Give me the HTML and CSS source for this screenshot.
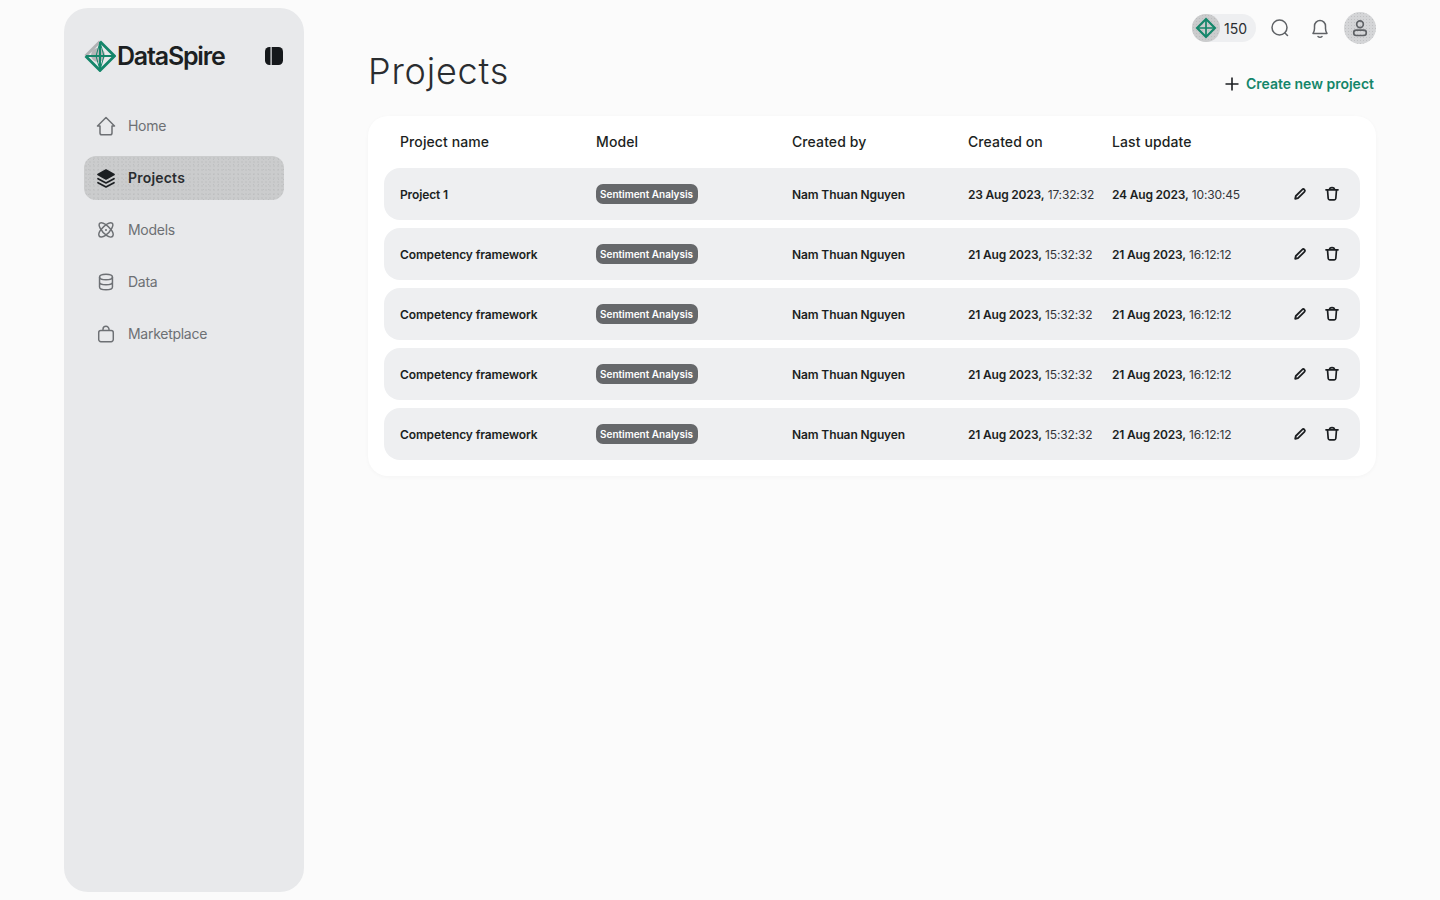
FILE: index.html
```html
<!DOCTYPE html>
<html lang="en">
<head>
<meta charset="utf-8">
<title>Projects</title>
<link rel="stylesheet" href="styles.css">
</head>
<body>
<div class="app">
  <aside class="sidebar">
    <div class="brand">
      <div class="logo">
        <svg class="logo-mark" width="32" height="32" viewBox="0 0 32 32" fill="none">
          <circle cx="14" cy="15" r="7" fill="#b4b6b8"/>
          <path d="M1.500 16 16 1.500" stroke="#b0b2b4" stroke-width="2.800"/>
          <path d="M16 1.500 30.500 16 16 30.500 1.500 16" stroke="#14866a" stroke-width="2.800"/>
          <path d="M16 2V30M2 16H30" stroke="#14866a" stroke-width="2"/>
          <path d="M16 2 12 16 16 30 20 16Z" stroke="#14866a" stroke-width="1"/>
        </svg>
        <span class="logo-text">DataSpire</span>
      </div>
      <svg width="18" height="18" viewBox="0 0 18 18"><rect x="0" y="0" width="18" height="18" rx="4.500" fill="#15181b"/><rect x="5.500" y="0" width="1.200" height="18" fill="#e8e9eb"/></svg>
    </div>
    <nav class="nav">
      <a class="nav-item">
        <svg class="nav-icon" viewBox="0 0 24 24" fill="none" stroke="#6d7074" stroke-width="1.500" stroke-linejoin="round"><path d="M12 3.500 3.500 12H6v7a1.800 1.800 0 0 0 1.800 1.800h8.400A1.800 1.800 0 0 0 18 19v-7h2.500Z"/></svg>
        Home
      </a>
      <a class="nav-item active">
        <svg class="nav-icon" viewBox="0 0 24 24" fill="none" stroke="#1c1f22" stroke-width="1.700" stroke-linejoin="round" stroke-linecap="round"><path d="M12 4 20 8.500l-8 4.500L4 8.500Z" fill="#1c1f22"/><path d="M4 12.700 12 17l8-4.300M4 16.700 12 21l8-4.300"/></svg>
        Projects
      </a>
      <a class="nav-item">
        <svg class="nav-icon" viewBox="-2 -2 28 28" fill="none" stroke="#6d7074" stroke-width="1.700"><path d="M5 9.500C3 5.500 4 3.500 6.500 3.500c3 0 7 3 11 7.500 3 3.500 3.500 6 2.500 8-1 1.500-4 1.500-7-.5C8.500 15.500 6.500 12.500 5 9.500Z"/><path d="M19 9.500c2-4 1-6-1.500-6-3 0-7 3-11 7.500-3 3.500-3.500 6-2.500 8 1 1.500 4 1.500 7-.5 4.500-3 6.500-6 8-9Z"/><circle cx="12" cy="12" r="1.200" fill="#6d7074" stroke="none"/></svg>
        Models
      </a>
      <a class="nav-item">
        <svg class="nav-icon" viewBox="-1 -1 26 26" fill="none" stroke="#6d7074" stroke-width="1.600"><ellipse cx="12" cy="6.500" rx="7" ry="3"/><path d="M5 6.500v11c0 1.700 3.100 3 7 3s7-1.300 7-3v-11M5 12c0 1.700 3.100 3 7 3s7-1.300 7-3"/></svg>
        Data
      </a>
      <a class="nav-item">
        <svg class="nav-icon" viewBox="-2 -2 28 28" fill="none" stroke="#6d7074" stroke-width="1.700"><path d="M6 8h12a2.500 2.500 0 0 1 2.500 2.500v8a2.500 2.500 0 0 1-2.500 2.500H6a2.500 2.500 0 0 1-2.500-2.500v-8A2.500 2.500 0 0 1 6 8Z"/><path d="M8.500 8V6.500a3.500 3.500 0 0 1 7 0V8"/></svg>
        Marketplace
      </a>
    </nav>
  </aside>
  <main class="main">
    <header class="topbar">
      <div class="credits">
        <span class="credit-icon">
          <svg width="22" height="22" viewBox="0 0 32 32" fill="none"><path d="M16 3 29 16 16 29 3 16Z" stroke="#14866a" stroke-width="3.200"/><path d="M16 3V29M3 16H29" stroke="#14866a" stroke-width="2.500"/></svg>
        </span>
        <span class="credit-count">150</span>
      </div>
      <div class="top-icons">
        <svg class="top-icon" viewBox="0 0 24 24" fill="none" stroke="#5f6266" stroke-width="1.500" stroke-linecap="round"><circle cx="11.500" cy="11.500" r="7.500"/><path d="M17 17 19.500 19.500"/></svg>
        <svg class="top-icon" viewBox="0 0 24 24" fill="none" stroke="#5f6266" stroke-width="1.500" stroke-linejoin="round" stroke-linecap="round"><path d="M5 17.500c1-1.500 1.500-2.500 1.500-5V10a5.500 5.500 0 0 1 11 0v2.500c0 2.500.5 3.500 1.500 5Z"/><path d="M10 20.500c1 1 3 1 4 0"/></svg>
      </div>
      <span class="avatar">
        <svg width="20" height="20" viewBox="0 0 24 24" fill="none" stroke="#5f6266" stroke-width="2"><circle cx="12" cy="7.500" r="4"/><rect x="4.500" y="14.500" width="15" height="6.500" rx="3"/></svg>
      </span>
    </header>
    <div class="title-row">
      <h1 class="title">Projects</h1>
      <a class="create">
        <svg width="16" height="16" viewBox="0 0 16 16" stroke="#1c1f22" stroke-width="1.600"><path d="M8 1.500v13M1.500 8h13"/></svg>
        Create new project
      </a>
    </div>
    <section class="card">
      <div class="row head">
        <span>Project name</span><span>Model</span><span>Created by</span><span>Created on</span><span>Last update</span><span></span>
      </div>
      <div class="list">
      <div class="row item">
        <span class="name">Project 1</span>
        <span><span class="tag">Sentiment Analysis</span></span>
        <span class="name">Nam Thuan Nguyen</span>
        <span class="date"><b>23 Aug 2023,</b> 17:32:32</span>
        <span class="date"><b>24 Aug 2023,</b> 10:30:45</span>
        <span class="actions">
          <svg class="act" viewBox="0 0 16 16" fill="none" stroke="#1c1f22" stroke-width="1.800" stroke-linejoin="round"><path d="M3.200 12.800l.6-2.800 6.400-6.400a1.500 1.500 0 0 1 2.200 2.200L6 12.200Z"/></svg>
          <svg class="act" viewBox="0 0 16 16" fill="none" stroke="#1c1f22" stroke-width="1.700" stroke-linecap="round" stroke-linejoin="round"><path d="M2 3.800h12M5.500 3.800c0-3 5-3 5 0M3.500 3.800l.7 8.700a1.500 1.500 0 0 0 1.500 1.300h4.600a1.500 1.500 0 0 0 1.500-1.300l.7-8.700"/></svg>
        </span>
      </div>
      <div class="row item">
        <span class="name">Competency framework</span>
        <span><span class="tag">Sentiment Analysis</span></span>
        <span class="name">Nam Thuan Nguyen</span>
        <span class="date"><b>21 Aug 2023,</b> 15:32:32</span>
        <span class="date"><b>21 Aug 2023,</b> 16:12:12</span>
        <span class="actions">
          <svg class="act" viewBox="0 0 16 16" fill="none" stroke="#1c1f22" stroke-width="1.800" stroke-linejoin="round"><path d="M3.200 12.800l.6-2.800 6.400-6.400a1.500 1.500 0 0 1 2.200 2.200L6 12.200Z"/></svg>
          <svg class="act" viewBox="0 0 16 16" fill="none" stroke="#1c1f22" stroke-width="1.700" stroke-linecap="round" stroke-linejoin="round"><path d="M2 3.800h12M5.500 3.800c0-3 5-3 5 0M3.500 3.800l.7 8.700a1.500 1.500 0 0 0 1.500 1.300h4.600a1.500 1.500 0 0 0 1.500-1.300l.7-8.700"/></svg>
        </span>
      </div>
      <div class="row item">
        <span class="name">Competency framework</span>
        <span><span class="tag">Sentiment Analysis</span></span>
        <span class="name">Nam Thuan Nguyen</span>
        <span class="date"><b>21 Aug 2023,</b> 15:32:32</span>
        <span class="date"><b>21 Aug 2023,</b> 16:12:12</span>
        <span class="actions">
          <svg class="act" viewBox="0 0 16 16" fill="none" stroke="#1c1f22" stroke-width="1.800" stroke-linejoin="round"><path d="M3.200 12.800l.6-2.800 6.400-6.400a1.500 1.500 0 0 1 2.200 2.200L6 12.200Z"/></svg>
          <svg class="act" viewBox="0 0 16 16" fill="none" stroke="#1c1f22" stroke-width="1.700" stroke-linecap="round" stroke-linejoin="round"><path d="M2 3.800h12M5.500 3.800c0-3 5-3 5 0M3.500 3.800l.7 8.700a1.500 1.500 0 0 0 1.500 1.300h4.600a1.500 1.500 0 0 0 1.500-1.300l.7-8.700"/></svg>
        </span>
      </div>
      <div class="row item">
        <span class="name">Competency framework</span>
        <span><span class="tag">Sentiment Analysis</span></span>
        <span class="name">Nam Thuan Nguyen</span>
        <span class="date"><b>21 Aug 2023,</b> 15:32:32</span>
        <span class="date"><b>21 Aug 2023,</b> 16:12:12</span>
        <span class="actions">
          <svg class="act" viewBox="0 0 16 16" fill="none" stroke="#1c1f22" stroke-width="1.800" stroke-linejoin="round"><path d="M3.200 12.800l.6-2.800 6.400-6.400a1.500 1.500 0 0 1 2.200 2.200L6 12.200Z"/></svg>
          <svg class="act" viewBox="0 0 16 16" fill="none" stroke="#1c1f22" stroke-width="1.700" stroke-linecap="round" stroke-linejoin="round"><path d="M2 3.800h12M5.500 3.800c0-3 5-3 5 0M3.500 3.800l.7 8.700a1.500 1.500 0 0 0 1.500 1.300h4.600a1.500 1.500 0 0 0 1.500-1.300l.7-8.700"/></svg>
        </span>
      </div>
      <div class="row item">
        <span class="name">Competency framework</span>
        <span><span class="tag">Sentiment Analysis</span></span>
        <span class="name">Nam Thuan Nguyen</span>
        <span class="date"><b>21 Aug 2023,</b> 15:32:32</span>
        <span class="date"><b>21 Aug 2023,</b> 16:12:12</span>
        <span class="actions">
          <svg class="act" viewBox="0 0 16 16" fill="none" stroke="#1c1f22" stroke-width="1.800" stroke-linejoin="round"><path d="M3.200 12.800l.6-2.800 6.400-6.400a1.500 1.500 0 0 1 2.200 2.200L6 12.200Z"/></svg>
          <svg class="act" viewBox="0 0 16 16" fill="none" stroke="#1c1f22" stroke-width="1.700" stroke-linecap="round" stroke-linejoin="round"><path d="M2 3.800h12M5.500 3.800c0-3 5-3 5 0M3.500 3.800l.7 8.700a1.500 1.500 0 0 0 1.500 1.300h4.600a1.500 1.500 0 0 0 1.500-1.300l.7-8.700"/></svg>
        </span>
      </div>
      </div>
    </section>
  </main>
</div>
</body>
</html>
```
FILE: styles.css
```css
* { box-sizing: border-box; }
html, body { margin: 0; height: 100%; }
body {
  background: #fbfbfb;
  color: #1c1f22;
  font-family: Inter, "Noto Sans", sans-serif;
  overflow: hidden;
}
.app {
  display: flex;
  height: 900px;
  padding: 8px 64px;
  gap: 64px;
}
.sidebar {
  width: 240px;
  flex: none;
  background: #e8e9eb;
  border-radius: 24px;
  padding: 28px 20px;
}
.brand {
  display: flex;
  align-items: center;
  justify-content: space-between;
  height: 40px;
  padding-right: 1px;
}
.logo { display: flex; align-items: center; }
.logo-text {
  font-size: 25px;
  font-weight: 600;
  letter-spacing: -1.2px;
  color: #1c1f22;
  margin-left: 1px;
}
.nav {
  margin-top: 28px;
  display: flex;
  flex-direction: column;
  gap: 8px;
}
.nav-item {
  display: flex;
  align-items: center;
  gap: 10px;
  height: 44px;
  padding: 0 10px 2px;
  border-radius: 12px;
  font-size: 14px;
  letter-spacing: -0.28px;
  color: #6d7074;
}
.nav-icon { width: 24px; height: 24px; flex: none; margin-top: 2px; }
.nav-item.active {
  font-weight: 600;
  color: #2a2d30;
  letter-spacing: 0.2px;
  background-color: #cbcccd;
  background-image:
    radial-gradient(#bcbdbf 0.6px, transparent 0.8px),
    radial-gradient(#bdbec0 0.5px, transparent 0.7px);
  background-size: 4px 4px, 5px 5px;
  background-position: 0 0, 2px 1px;
}
.main { flex: 1; min-width: 0; display: flex; flex-direction: column; }
.topbar {
  display: flex;
  align-items: center;
  justify-content: flex-end;
  height: 40px;
  gap: 12px;
}
.top-icons { display: flex; gap: 16px; }
.credits {
  display: flex;
  align-items: center;
  gap: 4px;
  height: 28px;
  width: 64px;
  border-radius: 14px;
  background: #eeeff1;
  font-size: 14px;
  color: #2a2d30;
}
.credit-icon {
  width: 28px;
  height: 28px;
  border-radius: 50%;
  display: flex;
  align-items: center;
  justify-content: center;
  background-color: #cbcccd;
  background-image: radial-gradient(#bcbdbf 0.6px, transparent 0.8px);
  background-size: 3px 3px;
}
.top-icon { width: 24px; height: 24px; flex: none; }
.avatar {
  width: 32px;
  height: 32px;
  border-radius: 50%;
  display: flex;
  align-items: center;
  justify-content: center;
  background-color: #d4d5d7;
  background-image: radial-gradient(#c0c1c3 0.6px, transparent 0.8px);
  background-size: 3px 3px;
}
.title-row {
  display: flex;
  align-items: flex-end;
  justify-content: space-between;
  height: 68px;
  padding-bottom: 23px;
}
.title {
  margin: 0 0 -1px;
  font-size: 36px;
  line-height: 46px;
  font-weight: 300;
  letter-spacing: 0.8px;
  color: #2a2d30;
}
.create {
  display: flex;
  align-items: center;
  gap: 6px;
  font-size: 14px;
  font-weight: 600;
  color: #14866a;
  margin: 0 2px 1px 0;
  line-height: 16px;
}
.card {
  background: #fff;
  border-radius: 20px;
  padding: 0 16px 16px;
  box-shadow: 0 1px 4px rgba(0,0,0,0.03);
}
.list {
  display: flex;
  flex-direction: column;
  gap: 8px;
}
.row {
  display: grid;
  grid-template-columns: 196px 196px 176px 144px 1fr 64px;
  align-items: center;
  padding: 0 16px;
}
.head {
  height: 52px;
  padding-bottom: 1px;
  font-size: 14px;
  font-weight: 500;
  letter-spacing: 0.1px;
  color: #1c1f22;
}
.item {
  height: 52px;
  background: #eeeff1;
  border-radius: 16px;
  font-size: 12px;
}
.name { font-weight: 600; color: #1c1f22; letter-spacing: -0.12px; }
.date { color: #33363a; white-space: nowrap; letter-spacing: -0.15px; }
.date b { font-weight: 600; color: #1c1f22; letter-spacing: -0.2px; }
.tag {
  display: inline-block;
  background: #66686b;
  color: #fff;
  font-size: 10px;
  font-weight: 600;
  line-height: 20px;
  padding: 0 5px 0 4px;
  border-radius: 7px;
  white-space: nowrap;
}
.actions {
  display: flex;
  justify-content: flex-end;
  gap: 16px;
  margin-right: 4px;
}
.act { width: 16px; height: 16px; }
```
